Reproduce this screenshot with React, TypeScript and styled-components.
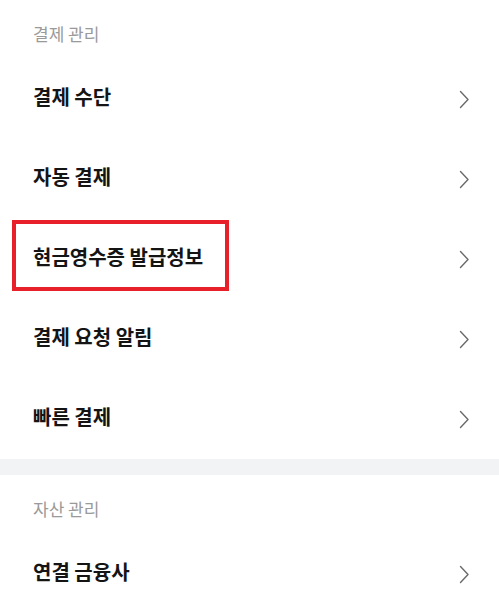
import styled, { createGlobalStyle } from 'styled-components'

const GlobalStyle = createGlobalStyle`
  html, body {
    margin: 0;
    padding: 0;
    background: #ffffff;
  }
  body {
    font-family: 'Noto Sans CJK KR', 'Noto Sans', sans-serif;
    -webkit-font-smoothing: antialiased;
  }
`

type Section = {
  title: string
  items: string[]
}

const sections: Section[] = [
  {
    title: '결제 관리',
    items: ['결제 수단', '자동 결제', '현금영수증 발급정보', '결제 요청 알림', '빠른 결제'],
  },
  {
    title: '자산 관리',
    items: ['연결 금융사'],
  },
]

const HIGHLIGHTED = '현금영수증 발급정보'

const Chevron = () => (
  <svg width="11" height="19" viewBox="0 0 11 19" fill="none">
    <path d="M1.5 1.5L9 9.5L1.5 17.5" stroke="#6b6b6b" strokeWidth="1.4" strokeLinecap="round" strokeLinejoin="round" />
  </svg>
)

export default function App() {
  return (
    <Page>
      <GlobalStyle />
      {sections.map((section, i) => (
        <div key={section.title}>
          {i > 0 && <Divider />}
          <SectionHeader>{section.title}</SectionHeader>
          {section.items.map((item) => (
            <Row key={item}>
              {item === HIGHLIGHTED && <Highlight />}
              <RowLabel>{item}</RowLabel>
              <Chevron />
            </Row>
          ))}
        </div>
      ))}
    </Page>
  )
}

const Page = styled.div`
  width: 100%;
  background: #ffffff;
  overflow: hidden;
`

const SectionHeader = styled.div`
  height: 59px;
  box-sizing: border-box;
  padding: 22px 33px 0;
  font-size: 17px;
  line-height: 24px;
  color: #9a9a9a;
`

const Row = styled.div`
  position: relative;
  height: 80px;
  display: flex;
  align-items: center;
  justify-content: space-between;
  padding: 0 29px 0 33px;
  box-sizing: border-box;
`

const RowLabel = styled.span`
  font-size: 20px;
  line-height: 26px;
  font-weight: 700;
  color: #141414;
  margin-top: -4px;
`

const Highlight = styled.div`
  position: absolute;
  left: 12px;
  top: 1px;
  width: 217px;
  height: 71px;
  box-sizing: border-box;
  border: 4px solid #e8202a;
  pointer-events: none;
`

const Divider = styled.div`
  height: 16px;
  background: #f2f3f5;
`
